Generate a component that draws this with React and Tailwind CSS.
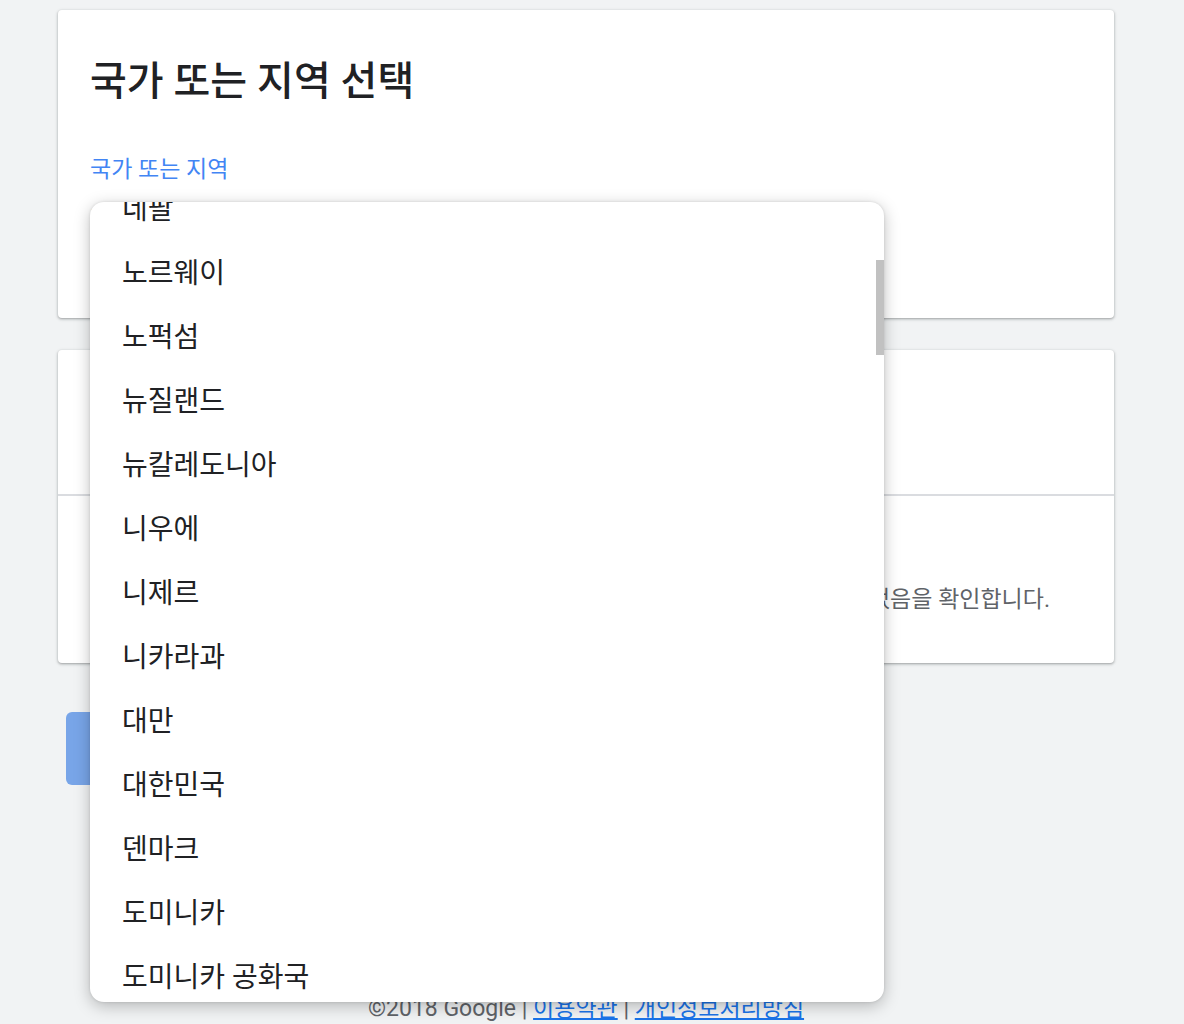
const countries = [
  '네팔',
  '노르웨이',
  '노퍽섬',
  '뉴질랜드',
  '뉴칼레도니아',
  '니우에',
  '니제르',
  '니카라과',
  '대만',
  '대한민국',
  '덴마크',
  '도미니카',
  '도미니카 공화국',
  '독일',
]

const font = "font-['Roboto','Noto_Sans_CJK_KR',sans-serif]"

export default function App() {
  return (
    <div className={`${font} min-h-[1024px] bg-[#f1f3f4] text-[#202124]`}>
      <div className="relative ml-[58px] w-[1056px] pt-[10px]">
        {/* country card */}
        <div className="h-[308px] rounded bg-white px-8 pt-[46px] shadow-[0_1px_2px_rgba(60,64,67,0.3),0_1px_3px_1px_rgba(60,64,67,0.15)]">
          <h1 className="text-[40px] font-medium leading-[52px]">국가 또는 지역 선택</h1>
          <div className="mt-[48px] text-[23px] leading-[28px] text-[#4285f4]">국가 또는 지역</div>
          <div className="mt-4 pb-3 text-[28px]">대한민국</div>
        </div>

        {/* terms card */}
        <div className="mt-8 h-[313px] rounded bg-white shadow-[0_1px_2px_rgba(60,64,67,0.3),0_1px_3px_1px_rgba(60,64,67,0.15)]">
          <div className="h-[146px] border-b-2 border-[#dadce0] px-8 pt-10">
            <div className="text-[28px] font-medium">서비스 약관</div>
          </div>
          <div className="flex items-center gap-4 pl-8 pr-16 pt-[90px]">
            <div className="h-[22px] w-[22px] shrink-0 rounded-sm border-2 border-[#5f6368]" />
            <p className="ml-auto whitespace-nowrap text-[23px] leading-[28px] text-[#5f6368]">
              본인은 서비스 약관을 읽고 이에 동의하며 만 18세 이상이 되었음을 확인합니다.
            </p>
          </div>
        </div>

        <div className="mt-[49px] px-2">
          <button className="h-[73px] w-[240px] rounded-md bg-[#78a5e8] text-[24px] font-medium text-white">
            계속
          </button>
        </div>

        <div className="mt-[210px] text-center text-[23px] leading-[28px] text-[#5f6368]">
          ©2018 Google | <a className="text-[#1a73e8] underline">이용약관</a> |{' '}
          <a className="text-[#1a73e8] underline">개인정보처리방침</a>
        </div>

        {/* open select menu */}
        <div className="absolute left-8 top-[202px] h-[800px] w-[794px] overflow-hidden rounded-[14px] bg-white shadow-[0_4px_16px_rgba(0,0,0,0.25),0_0_3px_rgba(0,0,0,0.12)]">
          <ul className="-mt-[24px]">
            {countries.map((c) => (
              <li key={c} className="flex h-16 items-center px-8 text-[28px] text-[#202124]">
                {c}
              </li>
            ))}
          </ul>
          <div className="absolute right-0 top-[58px] h-[95px] w-2 bg-[#c1c1c1]" />
        </div>
      </div>
    </div>
  )
}
